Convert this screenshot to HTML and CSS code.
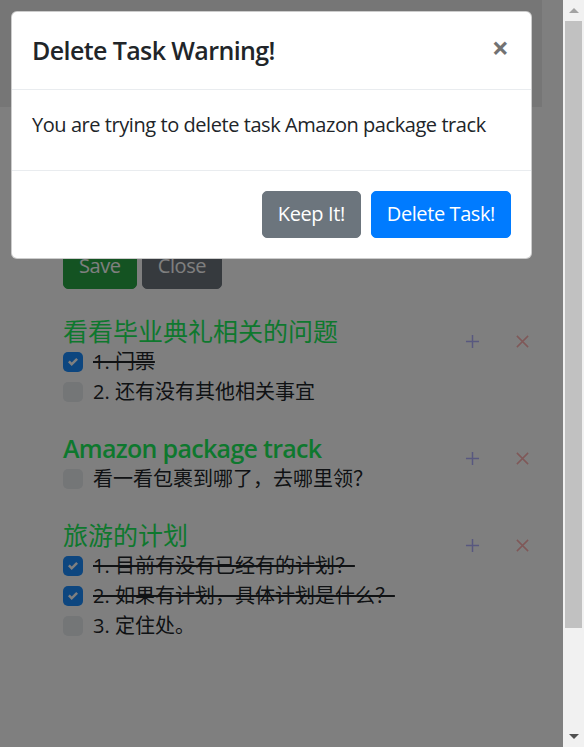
FILE: index.html
```html
<!DOCTYPE html>
<html lang="zh-CN">
<head>
<meta charset="utf-8">
<title>Todo</title>
<link rel="stylesheet" href="styles.css">
</head>
<body>
<div class="screen">
  <div class="viewport">
    <div class="page">
      <div class="banner"></div>
      <div class="editor"></div>
      <div class="form-actions">
        <button class="btn btn-success">Save</button>
        <button class="btn btn-secondary">Close</button>
      </div>
      <div class="groups">
        <div class="group">
          <div class="group-main">
            <h5 class="group-title">看看毕业典礼相关的问题</h5>
            <div class="item done"><span class="box checked"><svg viewBox="0 0 8 8" class="tick"><path d="M6.564.75l-3.59 3.612-1.538-1.55L0 4.26 2.974 7.25 8 2.193z" fill="#fff"/></svg></span><span class="label">1. 门票</span></div>
            <div class="item"><span class="box"></span><span class="label">2. 还有没有其他相关事宜</span></div>
          </div>
          <div class="group-actions">
            <span class="icon-btn add"><svg viewBox="0 0 16 16"><path d="M8 1v14M1 8h14" stroke="currentColor" stroke-width="1.6"/></svg></span>
            <span class="icon-btn remove"><svg viewBox="0 0 16 16"><path d="M2 2l12 12M14 2L2 14" stroke="currentColor" stroke-width="1.6"/></svg></span>
          </div>
        </div>
        <div class="group">
          <div class="group-main">
            <h5 class="group-title strong">Amazon package track</h5>
            <div class="item"><span class="box"></span><span class="label">看一看包裹到哪了，去哪里领？</span></div>
          </div>
          <div class="group-actions">
            <span class="icon-btn add"><svg viewBox="0 0 16 16"><path d="M8 1v14M1 8h14" stroke="currentColor" stroke-width="1.6"/></svg></span>
            <span class="icon-btn remove"><svg viewBox="0 0 16 16"><path d="M2 2l12 12M14 2L2 14" stroke="currentColor" stroke-width="1.6"/></svg></span>
          </div>
        </div>
        <div class="group">
          <div class="group-main">
            <h5 class="group-title">旅游的计划</h5>
            <div class="item done"><span class="box checked"><svg viewBox="0 0 8 8" class="tick"><path d="M6.564.75l-3.59 3.612-1.538-1.55L0 4.26 2.974 7.25 8 2.193z" fill="#fff"/></svg></span><span class="label">1. 目前有没有已经有的计划？</span></div>
            <div class="item done"><span class="box checked"><svg viewBox="0 0 8 8" class="tick"><path d="M6.564.75l-3.59 3.612-1.538-1.55L0 4.26 2.974 7.25 8 2.193z" fill="#fff"/></svg></span><span class="label">2. 如果有计划，具体计划是什么？</span></div>
            <div class="item"><span class="box"></span><span class="label">3. 定住处。</span></div>
          </div>
          <div class="group-actions">
            <span class="icon-btn add"><svg viewBox="0 0 16 16"><path d="M8 1v14M1 8h14" stroke="currentColor" stroke-width="1.6"/></svg></span>
            <span class="icon-btn remove"><svg viewBox="0 0 16 16"><path d="M2 2l12 12M14 2L2 14" stroke="currentColor" stroke-width="1.6"/></svg></span>
          </div>
        </div>
      </div>
    </div>
    <div class="backdrop"></div>
    <div class="modal">
      <div class="modal-header">
        <h5 class="modal-title">Delete Task Warning!</h5>
        <button class="close">×</button>
      </div>
      <div class="modal-body">
        <p class="message">You are trying to delete task Amazon package track</p>
      </div>
      <div class="modal-footer">
        <button class="btn btn-secondary">Keep It!</button>
        <button class="btn btn-primary">Delete Task!</button>
      </div>
    </div>
  </div>
  <div class="scrollbar">
    <div class="sb-arrow"><span class="tri up"></span></div>
    <div class="sb-track"><div class="sb-thumb"></div></div>
    <div class="sb-arrow"><span class="tri down"></span></div>
  </div>
</div>
</body>
</html>
```

FILE: styles.css
```css
html, body {
  margin: 0;
  padding: 0;
}
body {
  font-family: "Open Sans", "Noto Sans CJK SC", sans-serif;
  font-size: 20px;
  line-height: 1.5;
  color: #212529;
}
.screen {
  display: flex;
  width: 584px;
  height: 747px;
  overflow: hidden;
}
.viewport {
  position: relative;
  flex: 1;
  overflow: hidden;
  background: #fff;
}
.page {
  display: flex;
  flex-direction: column;
}
.banner {
  height: 107px;
  width: 542px;
  background: #ececec;
}
.editor {
  height: 135px;
}
.form-actions {
  display: flex;
  gap: 5px;
  padding-left: 63px;
  margin-bottom: 27px;
}
.btn {
  font-family: inherit;
  font-size: 20px;
  line-height: 30px;
  letter-spacing: -0.4px;
  padding: 7.5px 15px;
  border: 1px solid transparent;
  border-radius: 5px;
  color: #fff;
  cursor: pointer;
}
.btn-success { background: #28a745; border-color: #28a745; }
.btn-secondary { background: #6c757d; border-color: #6c757d; }
.btn-primary { background: #007bff; border-color: #007bff; }

.groups {
  padding: 0 16px 0 63px;
}
.group {
  display: flex;
  margin-bottom: 26px;
}
.group-main {
  flex: 1;
}
.group-title {
  margin: 0 0 1px;
  font-size: 25px;
  line-height: 30px;
  font-weight: 400;
  color: #1cf05c;
}
.group-title.strong {
  font-weight: 600;
  letter-spacing: -0.7px;
}
.item {
  display: flex;
  align-items: center;
  gap: 10px;
  height: 30px;
}
.box {
  width: 20px;
  height: 20px;
  border-radius: 5px;
  background: #e9ecef;
  display: flex;
  align-items: center;
  justify-content: center;
  flex: none;
}
.box.checked {
  background: #1a8cff;
}
.tick {
  width: 10px;
  height: 10px;
}
.done .label {
  text-decoration: line-through;
}
.group-actions {
  display: flex;
  padding-top: 15px;
}
.icon-btn {
  width: 50px;
  height: 20px;
  display: flex;
  align-items: center;
  justify-content: center;
}
.icon-btn svg {
  width: 15px;
  height: 15px;
}
.add { color: #b0b0ff; }
.remove { color: #ffb0b0; }

.backdrop {
  position: absolute;
  inset: 0;
  background: rgba(0, 0, 0, 0.5);
}
.modal {
  position: absolute;
  left: 11px;
  top: 11px;
  width: 521px;
  box-sizing: border-box;
  background: #fff;
  border: 1px solid rgba(0, 0, 0, 0.2);
  border-radius: 6px;
}
.modal-header {
  display: flex;
  align-items: flex-start;
  padding: 20px 20px 19px;
  border-bottom: 1px solid #e9ecef;
}
.modal-title {
  margin: 0;
  font-size: 25px;
  line-height: 37.5px;
  font-weight: 600;
  letter-spacing: -0.6px;
}
.close {
  margin: -19px -20px -20px auto;
  padding: 20px 22px 20px 20px;
  background: none;
  border: 0;
  font-family: inherit;
  font-size: 30px;
  font-weight: 700;
  line-height: 1;
  color: #000;
  opacity: 0.55;
}
.modal-body {
  padding: 20px;
}
.message {
  margin: 0 0 10px;
  letter-spacing: -0.44px;
}
.modal-footer {
  display: flex;
  justify-content: flex-end;
  align-items: center;
  padding: 15px;
  border-top: 1px solid #e9ecef;
}
.modal-footer .btn {
  margin: 5px;
}

.scrollbar {
  width: 21px;
  flex: none;
  background: #f1f1f1;
  display: flex;
  flex-direction: column;
}
.sb-arrow {
  height: 21px;
  display: flex;
  align-items: center;
  justify-content: center;
  flex: none;
}
.tri {
  width: 0;
  height: 0;
  border-left: 5px solid transparent;
  border-right: 5px solid transparent;
}
.tri.up { border-bottom: 5px solid #a3a3a3; }
.tri.down { border-top: 5px solid #505050; }
.sb-track {
  flex: 1;
  padding: 0 2px;
}
.sb-thumb {
  height: 607px;
  background: #c1c1c1;
}
```
